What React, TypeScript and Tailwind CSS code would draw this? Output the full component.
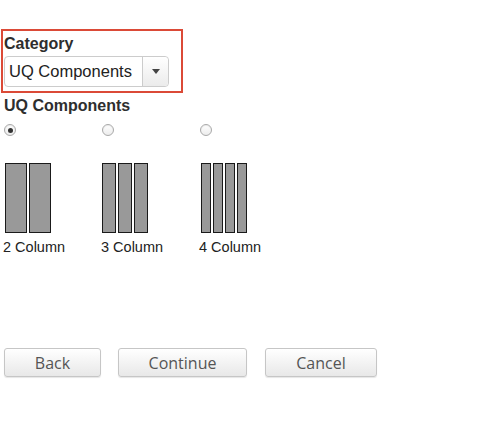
import React from "react";

function Bars({ n, w, start }: { n: number; w: number; start: number }) {
  return (
    <div className="flex gap-[2px] h-[70px]" style={{ marginLeft: start }}>
      {Array.from({ length: n }).map((_, i) => (
        <div key={i} className="h-full border border-[#1a1a1a] bg-[#999999]" style={{ width: w }} />
      ))}
    </div>
  );
}

function Radio({ checked }: { checked?: boolean }) {
  return (
    <div className="w-[12px] h-[12px] rounded-full border border-[#a9a9a9] bg-gradient-to-b from-[#ffffff] to-[#ececec] flex items-center justify-center shadow-[inset_0_1px_1px_rgba(0,0,0,0.08)]">
      {checked && <div className="w-[5px] h-[5px] rounded-full bg-[#333]" />}
    </div>
  );
}

export default function App() {
  const items = [
    { n: 2, w: 22, label: "2 Column", checked: true, start: 1 },
    { n: 3, w: 14, label: "3 Column", checked: false, start: 0 },
    { n: 4, w: 10, label: "4 Column", checked: false, start: 1 },
  ];
  return (
    <div className="w-[494px] h-[431px] bg-white pt-[29px] text-[#333]" style={{ fontFamily: '"Liberation Sans", Arial, sans-serif' }}>
      <div className="ml-[1px] w-[182px] border-2 border-[#db4a37] pl-[1px] pt-[4px] pb-[4px]">
        <div className="text-[16px] font-bold leading-[18px] text-[#2e2e2e]">Category</div>
        <div className="mt-[3px] h-[31px] w-[165px] rounded-[4px] border border-[#cccccc] flex bg-white">
          <div className="flex-1 flex items-center pl-[4px] text-[16.5px] text-[#222]">UQ Components</div>
          <div className="w-[26px] border-l border-[#cccccc] rounded-r-[4px] bg-gradient-to-b from-[#ffffff] to-[#ebebeb] flex items-center justify-center">
            <svg width="8" height="5" viewBox="0 0 8 5"><path d="M0 0 L8 0 L4 5 Z" fill="#444" /></svg>
          </div>
        </div>
      </div>
      <div className="mt-[4px] pl-[4px] text-[16px] font-bold leading-[18px] text-[#2e2e2e]">UQ Components</div>
      <div className="mt-[9px] pl-[4px] flex">
        {items.map((it) => (
          <div key={it.label} className="w-[98px] flex flex-col">
            <Radio checked={it.checked} />
            <div className="mt-[27px]">
              <Bars n={it.n} w={it.w} start={it.start} />
            </div>
            <div className="mt-[6px] -ml-[1px] text-[14.5px] leading-[17px] text-[#222]">{it.label}</div>
          </div>
        ))}
      </div>
      <div className="mt-[92px] pl-[4px] flex" style={{ fontFamily: '"Open Sans", sans-serif' }}>
        {[
          { t: "Back", w: 97, mr: 17 },
          { t: "Continue", w: 129, mr: 18 },
          { t: "Cancel", w: 112, mr: 0 },
        ].map((b) => (
          <button
            key={b.t}
            className="h-[29px] rounded-[3px] border border-[#c6c6c6] bg-gradient-to-b from-[#ffffff] to-[#e8e8e8] text-[16px] text-[#555] shadow-[0_1px_1px_rgba(0,0,0,0.1)] flex items-center justify-center pt-[1px]"
            style={{ width: b.w, marginRight: b.mr }}
          >
            {b.t}
          </button>
        ))}
      </div>
    </div>
  );
}
